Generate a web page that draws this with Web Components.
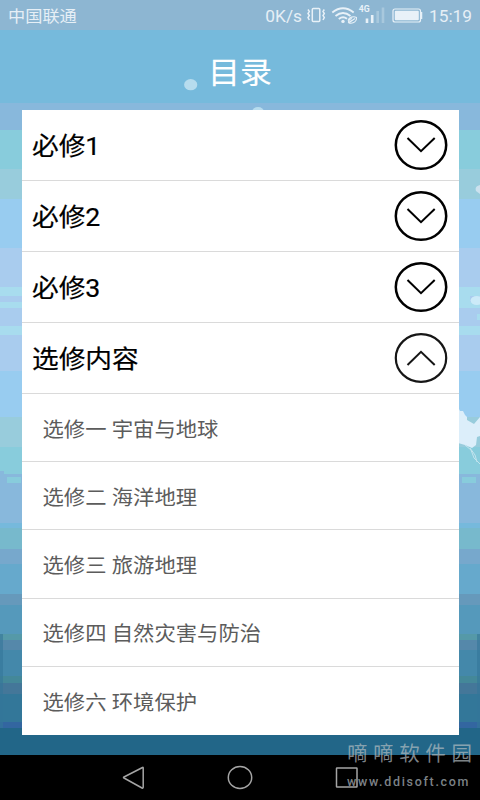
<!DOCTYPE html>
<html lang="zh-CN">
<head>
<meta charset="utf-8">
<title>目录</title>
<style>
html,body{margin:0;width:480px;height:800px;overflow:hidden;background:#000}
body{font-family:Roboto,"Noto Sans CJK SC",sans-serif}
</style>
</head>
<body>
<phone-screen>
  <status-bar slot="status"></status-bar>
  <page-title slot="title">目录</page-title>
  <chapter-list slot="content">
    <chapter-row>必修1</chapter-row>
    <chapter-row>必修2</chapter-row>
    <chapter-row>必修3</chapter-row>
    <chapter-row open>选修内容</chapter-row>
    <section-row>选修一 宇宙与地球</section-row>
    <section-row>选修二 海洋地理</section-row>
    <section-row>选修三 旅游地理</section-row>
    <section-row>选修四 自然灾害与防治</section-row>
    <section-row>选修六 环境保护</section-row>
  </chapter-list>
  <nav-bar slot="nav"></nav-bar>
  <site-mark slot="mark"></site-mark>
</phone-screen>
<script>
function define(name, html, setup) {
  customElements.define(name, class extends HTMLElement {
    constructor() {
      super();
      this.attachShadow({mode: 'open'}).innerHTML = html;
      if (setup) setup(this.shadowRoot);
    }
  });
}

define('sea-backdrop', `
<style>:host{display:block;width:480px;height:755px}svg{display:block}</style>
<svg width="480" height="755" viewBox="0 0 480 755"><g id="bands" shape-rendering="crispEdges"></g>
<path d="M0 471H4V474H21V477H7V483H21V474H0ZM459 477H480V474H459Z" fill="#88b8dc"/>
<path d="M7 477H21V483H7ZM462 477H476V483H462Z" fill="#88ccdc"/>
<path d="M459 296H470V302H459ZM477 314H480V320H477Z" fill="#a8dcee"/>
<ellipse cx="190.700" cy="84.700" rx="6.600" ry="5.600" fill="#b7dcee"/>
<ellipse cx="258" cy="112" rx="6" ry="5" fill="#b7dcee"/>
<path d="M480 185C476 186 475 188 476 191L480 194Z" fill="#cce1ee"/>
<ellipse cx="477" cy="300.500" rx="6.500" ry="4.500" fill="#cceaf8"/>
<path d="M458 407L460 411L463 411L465 415L467 417L467 420L474 424L480 417V436L477 437L476 445L472 448L465 445L458 443Z" fill="#dceefa"/>
<path d="M465 445L471 450L474 458L480 464M470 448L475 455L477 462" fill="none" stroke="#c3e4ee" stroke-width="1"/>
</svg>`, root => {
  const bands = [[0,'#8db6d2'],[30,'#76badc'],[103,'#88b8dc'],[130,'#88ccdc'],[169,'#98ccdc'],[199,'#98ccf0'],[248,'#a9ccee'],[287,'#a8dcee'],[296,'#a9ccee'],[302,'#a8dcee'],[308,'#a9ccee'],[326,'#a8dcee'],[335,'#a9ccee'],[371,'#98ccf0'],[417,'#98ccdc'],[447,'#88ccdc'],[474,'#88b8dc'],[523,'#76b9dc'],[528,'#77b9cc'],[549,'#77a8cc'],[564,'#66a9cc'],[594,'#6699bb'],[605,'#5599bb'],[634,'#5599a8'],[640,'#5588aa'],[650,'#4488aa'],[676,'#448899'],[683,'#447799'],[694,'#337799'],[722,'#3366a0'],[728,'#226688'],[755,'']];
  let out = '';
  for (let i = 0; i < bands.length - 1; i++)
    out += `<rect x="0" y="${bands[i][0]}" width="480" height="${bands[i+1][0]-bands[i][0]}" fill="${bands[i][1]}"/>`;
  out += '<rect x="0" y="634" width="3" height="94" fill="#337799" opacity=".6"/><rect x="477" y="634" width="3" height="94" fill="#337799" opacity=".6"/>';
  root.getElementById('bands').innerHTML = out;
});

define('phone-screen', `
<style>
:host{display:grid;grid-template-rows:30px 80px 625px 20px 45px;grid-template-columns:480px;width:480px;height:800px;overflow:hidden}
sea-backdrop{grid-area:1/1/5/2}
::slotted([slot=status]){grid-area:1/1}
::slotted([slot=title]){grid-area:2/1}
::slotted([slot=content]){grid-area:3/1;justify-self:center}
::slotted([slot=nav]){grid-area:5/1}
::slotted([slot=mark]){grid-area:4/1/6/2;justify-self:end}
</style>
<sea-backdrop></sea-backdrop><slot name="status"></slot><slot name="title"></slot><slot name="content"></slot><slot name="nav"></slot><slot name="mark"></slot>`);

define('status-bar', `
<style>
:host{display:flex;align-items:center;box-sizing:border-box;padding:1px 8px 0 8px;color:#e6eff6;font-size:17.300px;line-height:30px}
span{transform:scaleY(.94)}
.carrier{flex:1;font-size:17.200px}
svg{display:block;margin:0 5px 0 4px}
</style>
<span class="carrier">中国联通</span><span>0K/s</span>
<svg width="118" height="26" viewBox="306.500 3 118 26" fill="none" stroke="#e8f1f8">
<rect x="312.800" y="8.500" width="7.500" height="13" rx="1" stroke-width="1.500"/>
<path d="M308.500 9.500L309.800 11.500L308.500 13.500L309.800 15.500L308.500 17.500L309.800 20M324.800 9.500L323.500 11.500L324.800 13.500L323.500 15.500L324.800 17.500L323.500 20" stroke-width="1.500"/>
<path d="M332.800 12.500Q343.500 4 354.200 12.500M336 16Q343.500 10 351 16M339.300 19Q343.500 15.800 347.500 18.800" stroke-width="1.900"/>
<circle cx="343.500" cy="21.400" r="1.700" fill="#e8f1f8" stroke="none"/>
<path d="M348.500 20.500C349.500 17 354 16 357 17.500C357.500 21 354.500 24 349.500 23C348 22 349.500 19.500 352.500 18.500M350.500 22L355.500 18.500M352 20.500L349.500 22.500" stroke-width="1.100"/>
<text x="359.300" y="11.700" font-size="8.700" font-weight="700" fill="#e8f1f8" stroke="none">4G</text>
<path d="M367.500 18.500V23M372.700 15V23" stroke-width="2.600"/>
<path d="M378.200 11V23M383.500 7.500V23" stroke-width="2.600" stroke="#a8c8dd"/>
<rect x="393.500" y="9" width="27.500" height="13" rx="2" stroke-width="1.200"/>
<rect x="395.300" y="10.800" width="24" height="9.500" rx="1" fill="#e8f1f8" stroke="none"/>
<path d="M422 12V19" stroke-width="1.500"/>
</svg>
<span>15:19</span>`);

define('page-title', `
<style>:host{display:flex;justify-content:center;align-items:center;color:#fff;font-size:32px;-webkit-text-stroke:.15px #fff;line-height:40px;box-sizing:border-box;padding-top:6px}
span{transform:scaleY(.94)}</style><span><slot></slot></span>`);

define('chapter-list', `
<style>:host{display:flex;flex-direction:column;width:437px;height:625px;background:#fff}</style><slot></slot>`);

define('chapter-row', `
<style>
:host{display:flex;align-items:center;justify-content:space-between;height:71.250px;box-sizing:border-box;border-bottom:1.500px solid #dadada;padding:0 10.300px 0 10.500px;color:#000;font-size:26.700px;-webkit-text-stroke:.2px #000;line-height:40px}
span{transform:scaleY(.94);padding-top:4px}
svg{display:block}
:host([open]) path{transform:scaleY(-1);transform-origin:27px 26px}
:host([open]) g{stroke:#161616;stroke-width:2.200}
</style><span><slot></slot></span>
<svg width="54" height="52" viewBox="0 0 54 52"><g fill="none" stroke="#000" stroke-width="2.500"><ellipse cx="27" cy="26" rx="25.200" ry="23.800"/><path d="M13.500 19L27 32.200L40.700 19" stroke-width="2"/></g></svg>`);

define('section-row', `
<style>
:host{display:flex;align-items:center;height:68.400px;box-sizing:border-box;border-bottom:1.500px solid #dadada;padding-left:21px;color:#5c5c5c;font-size:21.330px;line-height:32px}
:host(:last-of-type){border-bottom:0}
span{transform:scaleY(.94);padding-top:6px}
</style><span><slot></slot></span>`);

define('nav-bar', `
<style>:host{display:block;background:#000}svg{display:block}</style>
<svg width="480" height="45" viewBox="0 755 480 45" fill="none" stroke="#a5a5a5" stroke-width="1.500"><path d="M142.500 767.500Q143.200 767 143.200 768V787Q143.200 788.500 142 788L124 778Q123 777.500 124 777Z"/><ellipse cx="240" cy="777.500" rx="11.700" ry="11"/><rect x="336.500" y="768" width="20.500" height="19" rx=".500"/></svg>`);

define('site-mark', `
<style>:host{display:flex;flex-direction:column;width:133px;box-sizing:border-box;padding-top:3px;color:rgba(180,190,194,.7);white-space:nowrap}
.name{font:20.500px/28px "Noto Sans CJK SC",sans-serif;letter-spacing:5.600px}
.url{font:500 12.500px/14px Roboto,sans-serif;letter-spacing:1.680px;margin-top:9px}
</style><span class="name">嘀嘀软件园</span><span class="url">www.ddisoft.com</span>`);
</script>
</body>
</html>
